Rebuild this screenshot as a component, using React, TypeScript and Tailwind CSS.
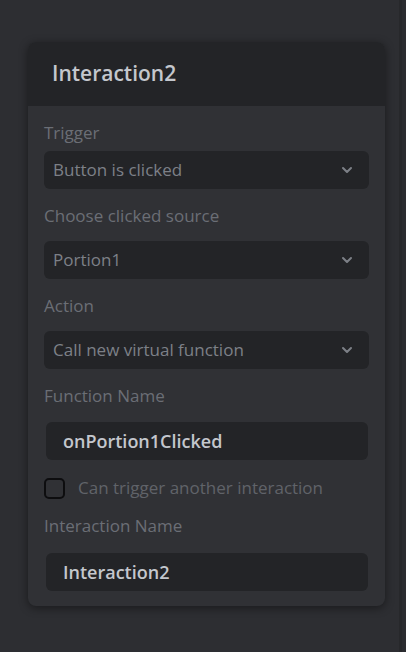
import React from "react";

type SelectProps = { value: string; className?: string };

function FakeSelect({ value, className = "" }: SelectProps) {
  return (
    <div
      className={`flex h-[38px] items-center justify-between rounded-md bg-[#232427] pl-[9px] pr-[16px] ${className}`}
    >
      <span className="text-[17px] text-[#7d8087]">{value}</span>
      <svg width="12" height="8" viewBox="0 0 12 8" fill="none">
        <path
          d="M2 2l4 4 4-4"
          stroke="#7d8087"
          strokeWidth="2"
          strokeLinecap="round"
          strokeLinejoin="round"
        />
      </svg>
    </div>
  );
}

function TextBox({ value, className = "" }: SelectProps) {
  return (
    <div
      className={`ml-[2px] mr-[1px] flex h-[38px] items-center rounded-md bg-[#232427] px-[17px] ${className}`}
    >
      <span className="text-[18px] font-semibold text-[#c4c7cd]">{value}</span>
    </div>
  );
}

function Label({ text, className = "" }: { text: string; className?: string }) {
  return <div className={`h-6 text-[17px] leading-6 text-[#6b6e75] ${className}`}>{text}</div>;
}

export default function App() {
  return (
    <div
      className="flex h-[652px] w-[406px] bg-[#2d2e32]"
      style={{ fontFamily: '"Open Sans", "Noto Sans", sans-serif' }}
    >
      <div className="flex-1 pl-[28px] pr-[14px] pt-[42px]">
        {/* panel */}
        <div className="overflow-hidden rounded-lg bg-[#303135] shadow-[0_2px_10px_rgba(0,0,0,0.45)]">
          <div className="flex h-16 items-center bg-[#232427] px-6">
            <h2 className="text-[21px] font-semibold text-[#c4c7cd]">Interaction2</h2>
          </div>

          <div className="px-4 pb-[15px] pt-[15px]">
            <Label text="Trigger" />
            <FakeSelect value="Button is clicked" className="mt-[6px]" />

            <Label text="Choose clicked source" className="mt-[15px]" />
            <FakeSelect value="Portion1" className="mt-[13px]" />

            <Label text="Action" className="mt-[15px]" />
            <FakeSelect value="Call new virtual function" className="mt-[13px]" />

            <Label text="Function Name" className="mt-[15px]" />
            <TextBox value="onPortion1Clicked" className="mt-[14px]" />

            <div className="mt-4 flex h-6 items-center gap-[13px]">
              <div className="h-[21px] w-[21px] rounded-[5px] border-2 border-[#0d0d0f]" />
              <span className="text-[17px] text-[#606369]">Can trigger another interaction</span>
            </div>

            <Label text="Interaction Name" className="mt-[14px]" />
            <TextBox value="Interaction2" className="mt-[15px]" />
          </div>
        </div>
      </div>

      {/* scrollbar strip */}
      <div className="flex">
        <div className="w-[3px] bg-[#27282b]" />
        <div className="w-[4px] bg-[#2b2c30]" />
      </div>
    </div>
  );
}
